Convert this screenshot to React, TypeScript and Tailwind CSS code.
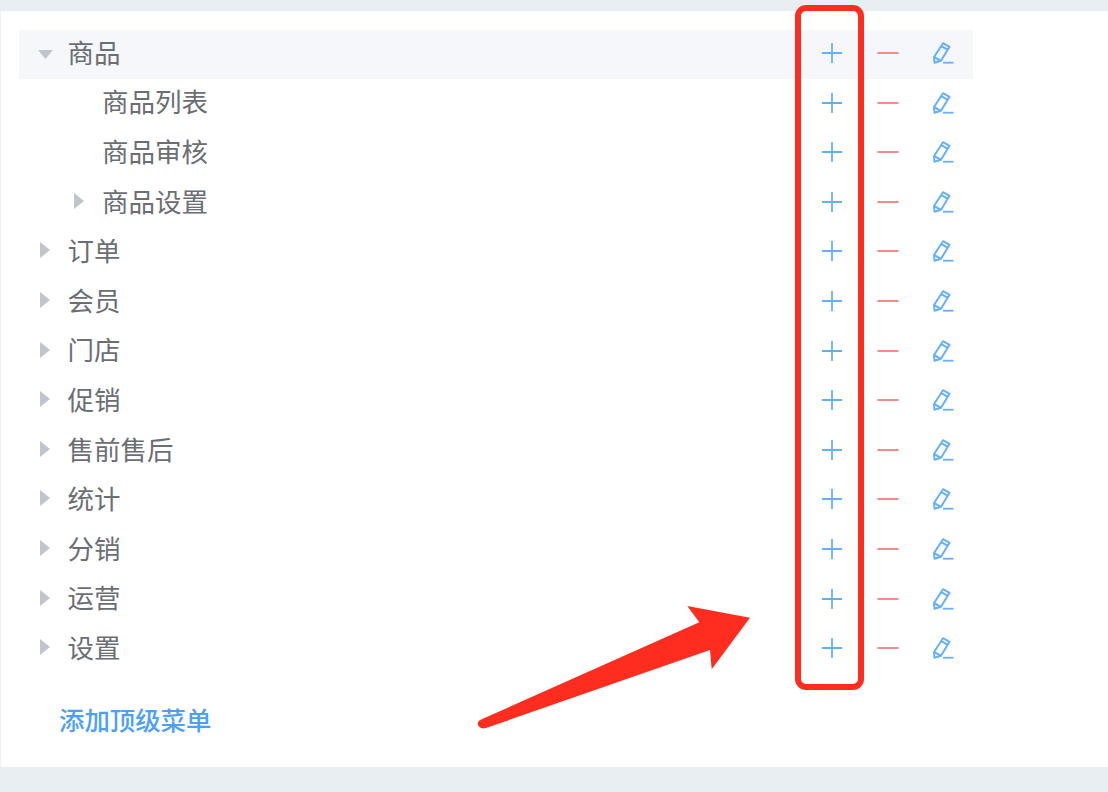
const rows: { label: string; level: number; caret?: "down" | "right"; active?: boolean }[] = [
  { label: "商品", level: 0, caret: "down", active: true },
  { label: "商品列表", level: 1 },
  { label: "商品审核", level: 1 },
  { label: "商品设置", level: 1, caret: "right" },
  { label: "订单", level: 0, caret: "right" },
  { label: "会员", level: 0, caret: "right" },
  { label: "门店", level: 0, caret: "right" },
  { label: "促销", level: 0, caret: "right" },
  { label: "售前售后", level: 0, caret: "right" },
  { label: "统计", level: 0, caret: "right" },
  { label: "分销", level: 0, caret: "right" },
  { label: "运营", level: 0, caret: "right" },
  { label: "设置", level: 0, caret: "right" },
];

function Caret({ dir }: { dir: "down" | "right" }) {
  return (
    <svg width="16" height="18" viewBox="0 0 16 18" className="block">
      {dir === "down" ? (
        <path d="M0 6 L15 6 L7.5 15 Z" fill="#c0c4cc" />
      ) : (
        <path d="M2 0 L12 8 L2 16 Z" fill="#c0c4cc" />
      )}
    </svg>
  );
}

function Plus() {
  return (
    <svg width="22" height="22" viewBox="0 0 22 22" className="block">
      <path d="M1 11 H21 M11 1 V21" stroke="#66b1ff" strokeWidth="1.8" fill="none" />
    </svg>
  );
}

function Minus() {
  return (
    <svg width="22" height="22" viewBox="0 0 22 22" className="block">
      <path d="M0.5 11 H21.5" stroke="#f78989" strokeWidth="2" fill="none" />
    </svg>
  );
}

function Pencil() {
  return (
    <svg width="22" height="22" viewBox="0 0 22 22" className="block">
      <path
        d="M10 1.2 L16.5 4.8 L8 18.8 L1.5 20.8 L1 15 Z M1 15 L8 18.8 M8.5 4.2 L14.8 7.8"
        stroke="#66b1ff"
        strokeWidth="2"
        strokeLinejoin="round"
        fill="none"
      />
      <path d="M10 20.7 H20.5" stroke="#66b1ff" strokeWidth="1.8" fill="none" />
    </svg>
  );
}

export default function App() {
  return (
    <div className="relative h-[792px] w-[1108px] overflow-hidden bg-[#e9eef3] pt-[11px] font-['Noto_Sans_CJK_SC','Noto_Sans',sans-serif]">
      <div className="h-[756px] border-l border-[#eef1f5] bg-white pl-[18px] pt-[19px]">
        <ul className="w-[954px]">
          {rows.map((r) => (
            <li
              key={r.label}
              className={`flex items-center pr-[18px] text-[26.5px] leading-none text-[#6b6e73] ${r.active ? "mb-[0.6px] h-[49px] bg-[#f5f7fa] pb-[2.4px]" : "h-[49.6px] pb-[3.6px]"} ${r.level === 1 ? "pl-[53px]" : "pl-[18.5px]"}`}
            >
              <span className="flex w-[30px] items-center">{r.caret ? <Caret dir={r.caret} /> : null}</span>
              <span className="flex-1 pb-[2px]">{r.label}</span>
              <span className="flex items-center gap-[34px]">
                <Plus />
                <Minus />
                <Pencil />
              </span>
            </li>
          ))}
        </ul>
        <div className="mt-[32px] pl-[40px] text-[25.4px] font-medium leading-none text-[#4ba0fb]">添加顶级菜单</div>
      </div>

      {/* annotation box */}
      <div className="absolute left-[795px] top-[5px] h-[685px] w-[69px] rounded-[11px] border-[6px] border-[#ff2d20]" />

      {/* annotation arrow */}
      <svg className="absolute left-0 top-0" width="1108" height="792" viewBox="0 0 1108 792">
        <path
          d="M750 617.7 L687.3 606 L699.3 622.3 L480 720 Q476.5 722 478.5 726 Q481 729.5 486 728 L710 650 L711.7 669.3 Z"
          fill="#ff2d20"
        />
      </svg>
    </div>
  );
}
